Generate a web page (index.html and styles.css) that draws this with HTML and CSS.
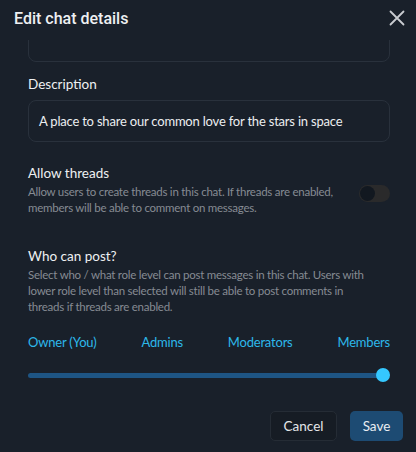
FILE: index.html
```html
<!DOCTYPE html>
<html>
<head>
<meta charset="utf-8">
<link rel="stylesheet" href="styles.css">
</head>
<body>
<div class="modal">
  <header class="head">
    <h1 class="title">Edit chat details</h1>
    <button class="close" aria-label="Close">
      <svg width="16" height="16" viewBox="0 0 16 16"><path d="M1.5 1.5 L14.5 14.5 M14.5 1.5 L1.5 14.5" stroke="#c9ccd1" stroke-width="1.8" stroke-linecap="round"/></svg>
    </button>
  </header>
  <div class="scroll">
    <div class="inner">
      <div class="field name"></div>
      <div class="label">Description</div>
      <div class="field desc">A place to share our common love for the stars in space</div>
      <div class="row">
        <div class="rowtext">
          <div class="label">Allow threads</div>
          <div class="help">Allow users to create threads in this chat. If threads are enabled, members will be able to comment on messages.</div>
        </div>
        <div class="toggle"><span class="knob"></span></div>
      </div>
      <div class="label who">Who can post?</div>
      <div class="help who-help">Select who / what role level can post messages in this chat. Users with lower role level than selected will still be able to post comments in threads if threads are enabled.</div>
      <div class="levels">
        <span>Owner (You)</span><span>Admins</span><span>Moderators</span><span>Members</span>
      </div>
      <div class="slider"><div class="track"></div><span class="thumb"></span></div>
    </div>
  </div>
  <footer class="foot">
    <button class="btn cancel">Cancel</button>
    <button class="btn save">Save</button>
  </footer>
</div>
</body>
</html>
```
FILE: styles.css
```css
* { box-sizing: border-box; }
html, body { margin: 0; padding: 0; }
body {
  background: #19202a;
  font-family: Lato, "Liberation Sans", sans-serif;
  color: #e6e8eb;
  width: 416px;
  height: 452px;
  overflow: hidden;
}
.modal { display: flex; flex-direction: column; height: 452px; }
.head {
  height: 40px;
  display: flex;
  justify-content: space-between;
  align-items: flex-start;
  padding: 8px 10px 0 14px;
}
.title { margin: 0; font-family: Roboto, sans-serif; font-size: 16px; font-weight: 500; line-height: 22px; color: #eef0f2; }
.close { background: none; border: 0; padding: 0; margin-top: 1px; width: 18px; height: 18px; display: flex; align-items: center; justify-content: center; }
.scroll { height: 358px; overflow: hidden; padding: 0 26px 0 28px; }
.inner { margin-top: -30px; }
.field {
  border: 1px solid #29313c;
  border-radius: 8px;
  height: 42px;
}
.name { height: 52px; }
.label { font-size: 13.5px; line-height: 20px; color: #eef0f2; }
.field + .label { margin-top: 12px; }
.desc {
  margin-top: 6px;
  padding: 0 10px;
  display: flex;
  align-items: center;
  font-size: 13px;
  letter-spacing: -0.2px;
  color: #eceef0;
}
.row { display: flex; align-items: center; gap: 10px; margin-top: 21px; }
.rowtext { flex: 1; }
.help { font-size: 11.5px; letter-spacing: -0.25px; line-height: 16px; color: #868b93; margin-top: 1px; }
.who-help { padding-right: 12px; }
.toggle {
  width: 31px; height: 17px; border-radius: 9px; background: #2a2a2b;
  position: relative; flex: none; margin-top: 7px;
}
.knob { position: absolute; left: 1px; top: 1px; width: 15px; height: 15px; border-radius: 50%; background: #121820; }
.who { margin-top: 30px; }
.levels {
  display: flex; justify-content: space-between;
  margin-top: 17px; font-size: 13px; letter-spacing: -0.2px; line-height: 20px; color: #2db8ea;
}
.slider { position: relative; margin-top: 16px; height: 14px; display: flex; align-items: center; }
.track { height: 5px; width: 100%; background: #1e5584; border-radius: 3px; margin-right: 7px; }
.thumb { position: absolute; right: 0; top: 0; width: 14px; height: 14px; border-radius: 50%; background: #35c8ff; }
.foot { display: flex; justify-content: flex-end; gap: 13px; padding: 13px 13px 0 0; }
.btn { font-family: inherit; font-size: 13.5px; height: 30px; border-radius: 5px; cursor: pointer; }
.cancel { width: 67px; background: #161c24; border: 1px solid #252c35; color: #e4e6e9; }
.save { width: 53px; background: #1d4b73; border: 0; color: #e8edf2; }
```
